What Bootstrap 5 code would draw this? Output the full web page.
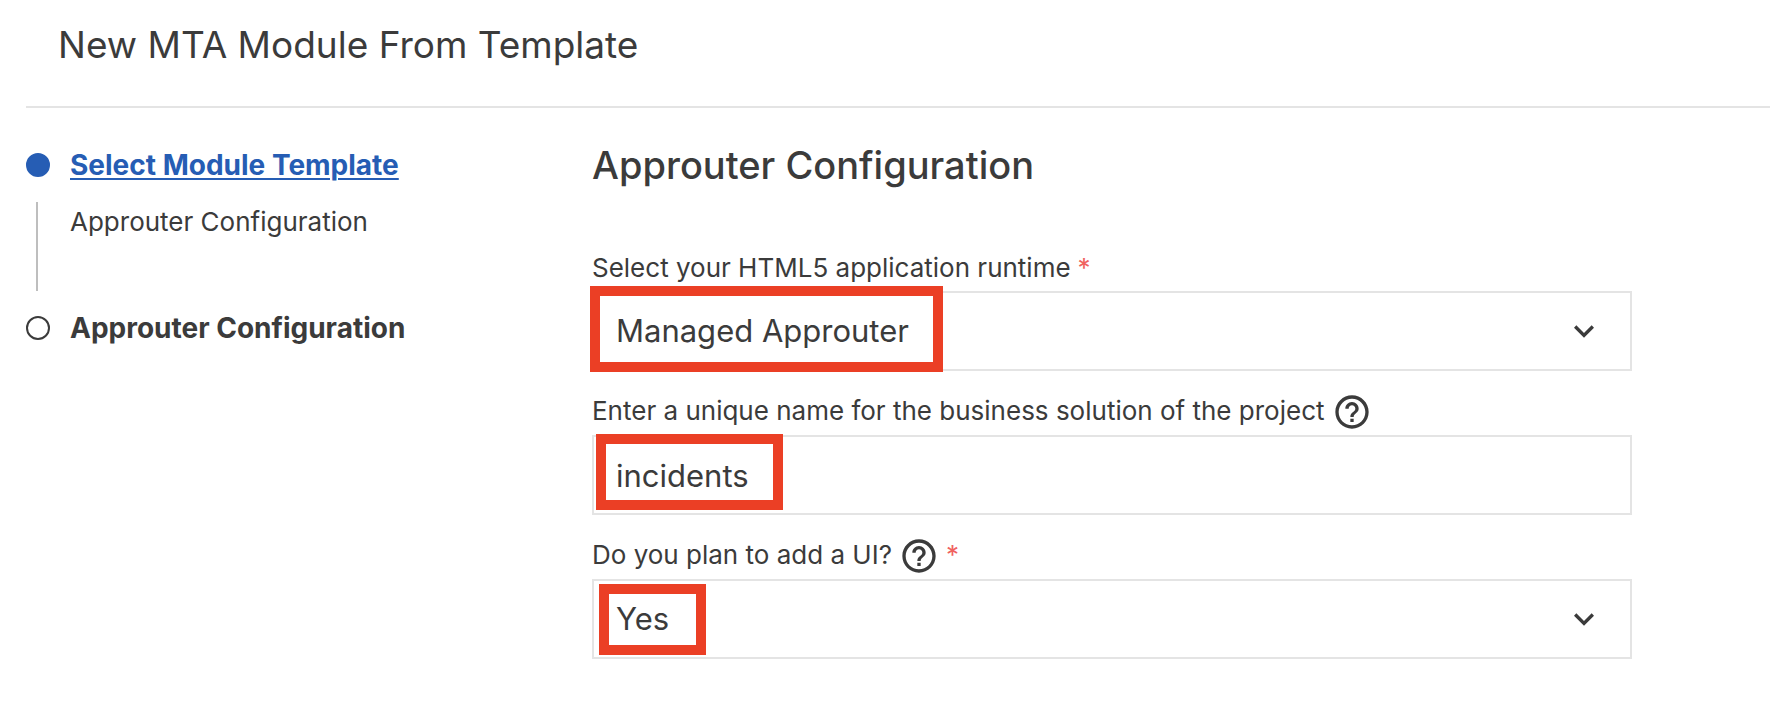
<!DOCTYPE html>
<html lang="en">
<head>
<meta charset="utf-8">
<meta name="viewport" content="width=device-width, initial-scale=1">
<title>New MTA Module From Template</title>
<link href="https://cdn.jsdelivr.net/npm/bootstrap@5.3.0/dist/css/bootstrap.min.css" rel="stylesheet">
<style>
  body { font-family: Inter, "Liberation Sans", sans-serif; color: #3b3b3b; background: #fff; }
  .wizard-header { margin-left: 26px; padding: 19px 32px 35px; border-bottom: 2px solid #e4e4e4; }
  .wizard-title { font-size: 37px; line-height: 52px; font-weight: 400; }
  .steps { padding: 40px 0 0 26px; }
  .step-head { gap: 20px; font-size: 28px; line-height: 34px; font-weight: 700; }
  .step-dot { width: 24px; height: 24px; flex: none; border: 2px solid #3b3b3b; border-radius: 50%; }
  .step-dot.done { background: #265db4; border-color: #265db4; }
  .step-head a { color: #265db4; text-decoration-thickness: 2px; text-underline-offset: 3px; }
  .step-body { margin: 20px 0 20px 10px; padding: 2px 0 0 32px; height: 89px; border-left: 2px solid #bebebe; font-size: 26px; line-height: 36px; }
  .form-pane { padding: 31px 138px 32px 2px; }
  .pane-title { font-size: 38px; line-height: 52px; font-weight: 500; margin-bottom: 59px; }
  .field { margin-bottom: 21px; }
  .field-head { font-size: 26px; line-height: 36px; gap: 7px; margin-bottom: 3px; }
  .field-head label, .required { padding-bottom: 2px; }
  .help { width: 40px; height: 40px; color: #3b3b3b; }
  .help svg, .chevron { width: 40px; height: 40px; display: block; fill: #3b3b3b; }
  .required { color: #f0625f; }
  .field-box { height: 80px; padding: 0 22px; border: 2px solid #e4e4e4; border-radius: 0; background: #fff none; color: #3b3b3b; font-size: 31px; line-height: 40px; }
  .chevron { position: absolute; right: 28px; top: 20px; pointer-events: none; }
  .callout { position: absolute; border: 10px solid #eb3f25; pointer-events: none; }
  .callout-runtime { left: -2px; top: -5px; width: 353px; height: 86px; }
  .callout-name { left: 4px; top: -1px; width: 187px; height: 76px; }
  .callout-ui { left: 7px; top: 5px; width: 107px; height: 71px; }
</style>
</head>
<body>
<header class="wizard-header">
  <h1 class="wizard-title m-0">New MTA Module From Template</h1>
</header>
<div class="row g-0">
  <nav class="col-4 steps" aria-label="Wizard steps">
    <div class="step-head d-flex align-items-center"><span class="step-dot done"></span><a href="#template">Select Module Template</a></div>
    <div class="step-body">Approuter Configuration</div>
    <div class="step-head d-flex align-items-center" aria-current="step"><span class="step-dot"></span><span>Approuter Configuration</span></div>
  </nav>
  <main class="col-8 form-pane">
    <h2 class="pane-title">Approuter Configuration</h2>
    <form>
      <div class="field">
        <div class="field-head d-flex align-items-center">
          <label for="runtime">Select your HTML5 application runtime</label>
          <span class="required">*</span>
        </div>
        <div class="position-relative">
          <select id="runtime" class="form-select field-box" required>
            <option selected>Managed Approuter</option>
            <option>Standalone Approuter</option>
          </select>
          <svg class="chevron" viewBox="0 0 24 24" aria-hidden="true"><path d="M7.41 8.58 12 13.17l4.59-4.59L18 10l-6 6-6-6z"/></svg>
          <div class="callout callout-runtime"></div>
        </div>
      </div>
      <div class="field">
        <div class="field-head d-flex align-items-center">
          <label for="solution">Enter a unique name for the business solution of the project</label>
          <button type="button" class="btn help p-0 border-0" aria-label="Help">
            <svg viewBox="0 0 24 24" aria-hidden="true"><path d="M11 18h2v-2h-2v2zm1-16C6.48 2 2 6.48 2 12s4.48 10 10 10 10-4.48 10-10S17.52 2 12 2zm0 18c-4.41 0-8-3.59-8-8s3.59-8 8-8 8 3.59 8 8-3.59 8-8 8zm0-14c-2.21 0-4 1.79-4 4h2c0-1.1.9-2 2-2s2 .9 2 2c0 2-3 1.75-3 5h2c0-2.25 3-2.5 3-5 0-2.21-1.79-4-4-4z"/></svg>
          </button>
        </div>
        <div class="position-relative">
          <input id="solution" type="text" class="form-control field-box" value="incidents">
          <div class="callout callout-name"></div>
        </div>
      </div>
      <div class="field">
        <div class="field-head d-flex align-items-center">
          <label for="addui">Do you plan to add a UI?</label>
          <button type="button" class="btn help p-0 border-0" aria-label="Help">
            <svg viewBox="0 0 24 24" aria-hidden="true"><path d="M11 18h2v-2h-2v2zm1-16C6.48 2 2 6.48 2 12s4.48 10 10 10 10-4.48 10-10S17.52 2 12 2zm0 18c-4.41 0-8-3.59-8-8s3.59-8 8-8 8 3.59 8 8-3.59 8-8 8zm0-14c-2.21 0-4 1.79-4 4h2c0-1.1.9-2 2-2s2 .9 2 2c0 2-3 1.75-3 5h2c0-2.25 3-2.5 3-5 0-2.21-1.79-4-4-4z"/></svg>
          </button>
          <span class="required">*</span>
        </div>
        <div class="position-relative">
          <select id="addui" class="form-select field-box" required>
            <option selected>Yes</option>
            <option>No</option>
          </select>
          <svg class="chevron" viewBox="0 0 24 24" aria-hidden="true"><path d="M7.41 8.58 12 13.17l4.59-4.59L18 10l-6 6-6-6z"/></svg>
          <div class="callout callout-ui"></div>
        </div>
      </div>
    </form>
  </main>
</div>
<script src="https://cdn.jsdelivr.net/npm/bootstrap@5.3.0/dist/js/bootstrap.bundle.min.js"></script>
</body>
</html>
